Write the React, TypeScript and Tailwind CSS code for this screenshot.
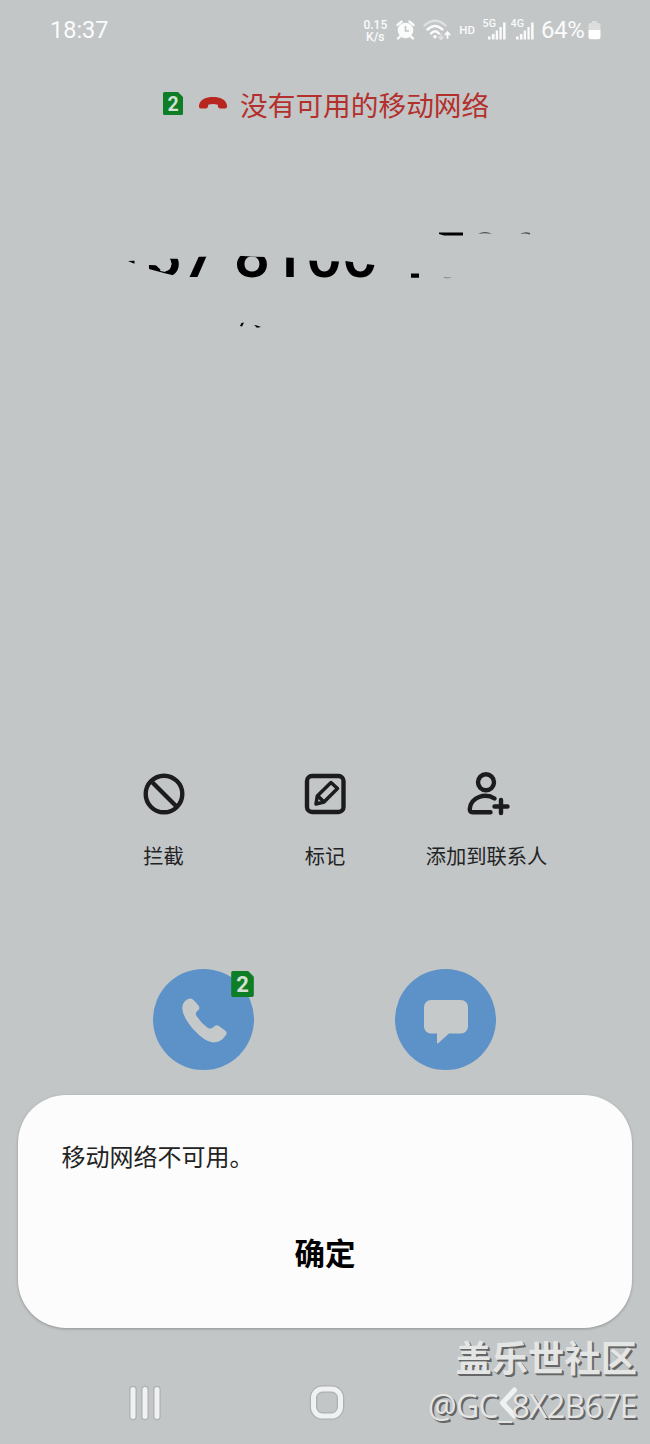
import React from "react";

const DIGITS = [
  { char: "3", clip: "polygon(8% 66%, 30% 67%, 38% 75%, 52% 78%, 66% 73%, 71% 64%, 66% 55%, 100% 55%, 100% 80%, 90% 85%, 78% 85%, 52% 81%, 8% 73%)" },
  { char: "7", clip: "polygon(0% 52%, 100% 51%, 100% 100%, 0% 100%)" },
  { char: " ", clip: "none" },
  { char: "8", clip: "polygon(0% 49%, 50% 51%, 100% 52%, 100% 100%, 0% 100%)" },
  { char: "1", clip: "polygon(0% 52%, 100% 54%, 100% 100%, 0% 100%)" },
  { char: "0", clip: "polygon(0% 58%, 100% 60%, 100% 100%, 0% 100%)" },
  { char: "0", clip: "polygon(0% 58%, 50% 63%, 100% 67%, 100% 100%, 0% 100%)" },
];

const Signal = ({ label }: { label: string }) => (
  <svg width="24" height="24" viewBox="0 0 24 24" fill="#fbfbfb">
    <text x="-.5" y="9.3" fontSize="10.8" fontWeight="500" fontFamily="Roboto, sans-serif">
      {label}
    </text>
    <path d="M5 18.5h2.6v3H5zM8.9 16h2.6v5.5H8.9zM12.700 12.500h2.300v9h-2.300zM16.400 9h2.300v12.500h-2.300zM20.100 4.500h2.500v17h-2.500z" />
  </svg>
);

const StatusBar = () => (
  <div className="flex h-[60px] shrink-0 items-center pl-[50px] pr-[49px] text-[#fbfbfb]">
    <span className="pt-[2px] text-[23.5px] leading-none">18:37</span>
    <div className="ml-auto flex items-center">
      <div className="mr-[1px] w-[26px] pt-[1px] text-center text-[12px] font-medium leading-[12px]">
        <div>0.15</div>
        <div>K/s</div>
      </div>
      <svg className="ml-[7px]" width="19" height="20" viewBox="0 0 19 20">
        <circle cx="9.5" cy="10.5" r="7.8" fill="#fbfbfb" />
        <path d="M1.5 5l4-3.4M17.5 5l-4-3.4M4 16.5l-2 2M15 16.5l2 2" stroke="#fbfbfb" strokeWidth="2.4" strokeLinecap="round" />
        <path d="M9.5 6v5h3.5" fill="none" stroke="#c2c6c7" strokeWidth="1.6" />
      </svg>
      <svg className="ml-[8px]" width="28" height="22" viewBox="0 0 28 22" fill="none" strokeLinecap="round">
        <path d="M1.500 6.500Q12-3 22.500 6.500" stroke="#dfe1e1" strokeWidth="2.3" />
        <path d="M4.500 10.5Q12 3.5 19.500 10.5M8 14.5Q12 10 16 14.5" stroke="#fbfbfb" strokeWidth="2.5" />
        <circle cx="12" cy="17.8" r="1.8" fill="#fbfbfb" />
        <path d="M18 15v5M15.8 18l2.2 2.5 2.2-2.5" stroke="#dfe1e1" strokeWidth="1.5" />
        <path d="M24.5 19v-5.500M22.3 15.5l2.2-2.5 2.2 2.5" stroke="#fbfbfb" strokeWidth="1.8" />
      </svg>
      <span className="ml-[8px] mr-[8px] pt-[1px] text-[11.5px] font-medium leading-none">HD</span>
      <Signal label="5G" />
      <span className="w-[4px]" />
      <Signal label="4G" />
      <span className="ml-[6px] w-[43px] whitespace-nowrap text-[24px] leading-none tracking-[-0.4px]">64%</span>
      <svg className="ml-[4px]" width="13" height="20" viewBox="0 0 13 20">
        <path d="M4 1h5v2h1.5a2 2 0 0 1 2 2v5H.5V5a2 2 0 0 1 2-2H4z" fill="#dcdede" />
        <path d="M.5 10h12v7a2.3 2.3 0 0 1-2.3 2.3H2.8A2.3 2.3 0 0 1 .5 17z" fill="#fff" />
      </svg>
    </div>
  </div>
);

const SimBadge = ({ className }: { className: string }) => (
  <svg className={className} viewBox="0 0 20 23">
    <path d="M1.5 0H15l5 5v16.5a1.5 1.5 0 0 1-1.5 1.5h-17A1.5 1.5 0 0 1 0 21.5v-20A1.5 1.5 0 0 1 1.5 0z" fill="#0d7d26" />
    <text x="10" y="18.5" textAnchor="middle" fontSize="19.5" fontWeight="700" fontFamily="Roboto, sans-serif" fill="#d3e0d5">
      2
    </text>
  </svg>
);

const Action = ({ label, children }: { label: string; children: React.ReactNode }) => (
  <div className="flex w-[161.5px] flex-col items-center">
    <svg width="48" height="48" viewBox="0 0 48 48" fill="none" stroke="#1c1c1e" strokeWidth="4.4" strokeLinecap="round" strokeLinejoin="round">
      {children}
    </svg>
    <span className="mt-[24px] whitespace-nowrap text-[20.3px] leading-[30px] text-[#222324]">{label}</span>
  </div>
);

export default function App() {
  return (
    <div className="flex h-[1444px] w-[650px] flex-col overflow-hidden bg-[#c2c6c7] font-[Roboto,'Noto_Sans_CJK_SC',sans-serif]">
      <StatusBar />

      <div className="mt-[25px] flex h-[40px] items-center pl-[163px]">
        <SimBadge className="mb-[3px] h-[23px] w-[20px]" />
        <svg className="mb-[4px] ml-[15px]" width="30" height="14" viewBox="0 0 30 14">
          <path d="M1 9.3C2 3.5 8 1 15 1s13 2.5 14 8.3c.3 2-.5 3.3-2 3.3h-4.7c-1.5 0-2.3-1-2.4-2.5l-.1-1.4Q15 7.2 10.2 8.7l-.1 1.4c-.1 1.5-.9 2.5-2.4 2.5H3c-1.5 0-2.3-1.3-2-3.3z" fill="#b8261f" />
        </svg>
        <span className="ml-[12px] whitespace-nowrap pt-[3px] text-[27.7px] leading-[40px] text-[#b3302c]">没有可用的移动网络</span>
      </div>

      {/* partly wiped caller number */}
      <div className="relative mt-[103px] flex h-[56px] pl-[146px] text-[64px] font-medium leading-[56px] tracking-[-0.3px] text-black">
        {DIGITS.map((d, i) => (
          <span key={i} className="whitespace-pre" style={{ clipPath: d.clip }}>
            {d.char}
          </span>
        ))}
        <svg className="absolute left-0 top-0" width="650" height="110" viewBox="0 228 650 110">
          <path d="M128 261l6.500-.3v3l-3-1.200zM149.500 265.500l7 .3 4 4-1 1.500-10-3zM439 232.500h24v3h-19l-5-1.500zM411 273.500h8v4.300h-8zM240 326l1.500-3 2.5-.5-2 4zM254 325l3 .5 4 1.500-4 .8z" />
          <path d="M478 234q7-4 14 0-7-1.500-14 0zM520 234q5-3 10-1v1.500q-5-1.500-10-.5zM443 277q5 1.500 9 0-5 2.500-9 0z" fill="#4c4e4f" />
        </svg>
      </div>

      <div className="mt-[486px] flex pl-[82.800px]">
        <Action label="拦截">
          <circle cx="24" cy="24" r="18.3" />
          <path d="M11.5 11.5l25 25" />
        </Action>
        <Action label="标记">
          <rect x="6" y="6" width="36.5" height="36" rx="5" />
          <path d="M15 34l1.300-8L30 12.500l6.500 6L23 32zM17 26l6 6" strokeWidth="3.500" />
        </Action>
        <Action label="添加到联系人">
          <circle cx="23" cy="12.300" r="8" />
          <path d="M31.500 28.500C22.500 22.500 7.500 27 6.800 39c-.1 2 .7 3.300 2.700 3.300h18M38 30v13M31.500 36.500h13" />
        </Action>
      </div>

      <div className="mt-[97px] flex pl-[153px]">
        <div className="relative flex size-[101px] items-center justify-center rounded-full bg-[#5c92c7]">
          <svg width="46" height="48" viewBox="0 0 46 48" fill="#c5c9ca">
            <path d="M3.500 5.500Q7 2 10 2.500q2 .5 4.500 3.500l3 3.500q2 3-.5 5-3.500 2-1.500 5.500Q20 27 27 32q3 1.500 5.500-1 2.500-3 5.500-1l6 4.500q3 2.500.5 5Q40 46.500 32 46.500 24 46 12 33 1.500 20.500 1.200 12q0-4 2.300-6.500z" />
          </svg>
          <SimBadge className="absolute left-[78px] top-[2px] h-[26px] w-[23px]" />
        </div>
        <div className="ml-[141px] flex size-[101px] items-center justify-center rounded-full bg-[#5c92c7]">
          <svg className="mt-[4px]" width="44" height="44" viewBox="0 0 44 44" fill="#c5c9ca">
            <path d="M7 0h30a7 7 0 0 1 7 7v19.5a7 7 0 0 1-7 7H25l-10.5 9.500q-1.500 1-1.500-.5v-9H7a7 7 0 0 1-7-7V7a7 7 0 0 1 7-7z" />
          </svg>
        </div>
      </div>

      <div className="mx-[18px] mt-[25px] flex h-[233px] shrink-0 flex-col rounded-[48px] bg-[#fcfcfc] px-[43.5px] pt-[45px] shadow-[0_1px_3px_rgba(0,0,0,0.25)]">
        <p className="text-[24px] leading-[36px] text-[#232323]">移动网络不可用。</p>
        <button className="mt-[56px] text-[30.5px] font-bold leading-[46px] text-black">确定</button>
      </div>

      <div className="relative flex h-[116px] flex-col items-end pr-[13px] pt-[10px] text-[#e4e5e5] [text-shadow:1px_1px_0_#666,2px_2px_0_#666]">
        <svg className="absolute left-[120px] top-[52px]" width="410" height="46" viewBox="120 1380 410 46" fill="none" strokeLinecap="round" strokeLinejoin="round">
          <g stroke="#adb1b2" strokeWidth="7.5">
            <path d="M133 1389.5v27M145 1389.5v27M157 1389.5v27" />
            <rect x="313.5" y="1389" width="27" height="27" rx="9" />
          </g>
          <g stroke="#f0f1f2" strokeWidth="5">
            <path d="M133 1389.5v27M145 1389.5v27M157 1389.5v27" />
            <rect x="313.5" y="1389" width="27" height="27" rx="9" />
            <path d="M514.5 1390l-12 13 12 13" />
          </g>
        </svg>
        <div className="relative whitespace-nowrap text-[36.3px] font-bold leading-[44px]">盖乐世社区</div>
        <div className="relative whitespace-nowrap font-['Open_Sans',sans-serif] text-[32px] leading-[48px] tracking-[-0.65px]">@GC_8X2B67E</div>
      </div>
    </div>
  );
}
